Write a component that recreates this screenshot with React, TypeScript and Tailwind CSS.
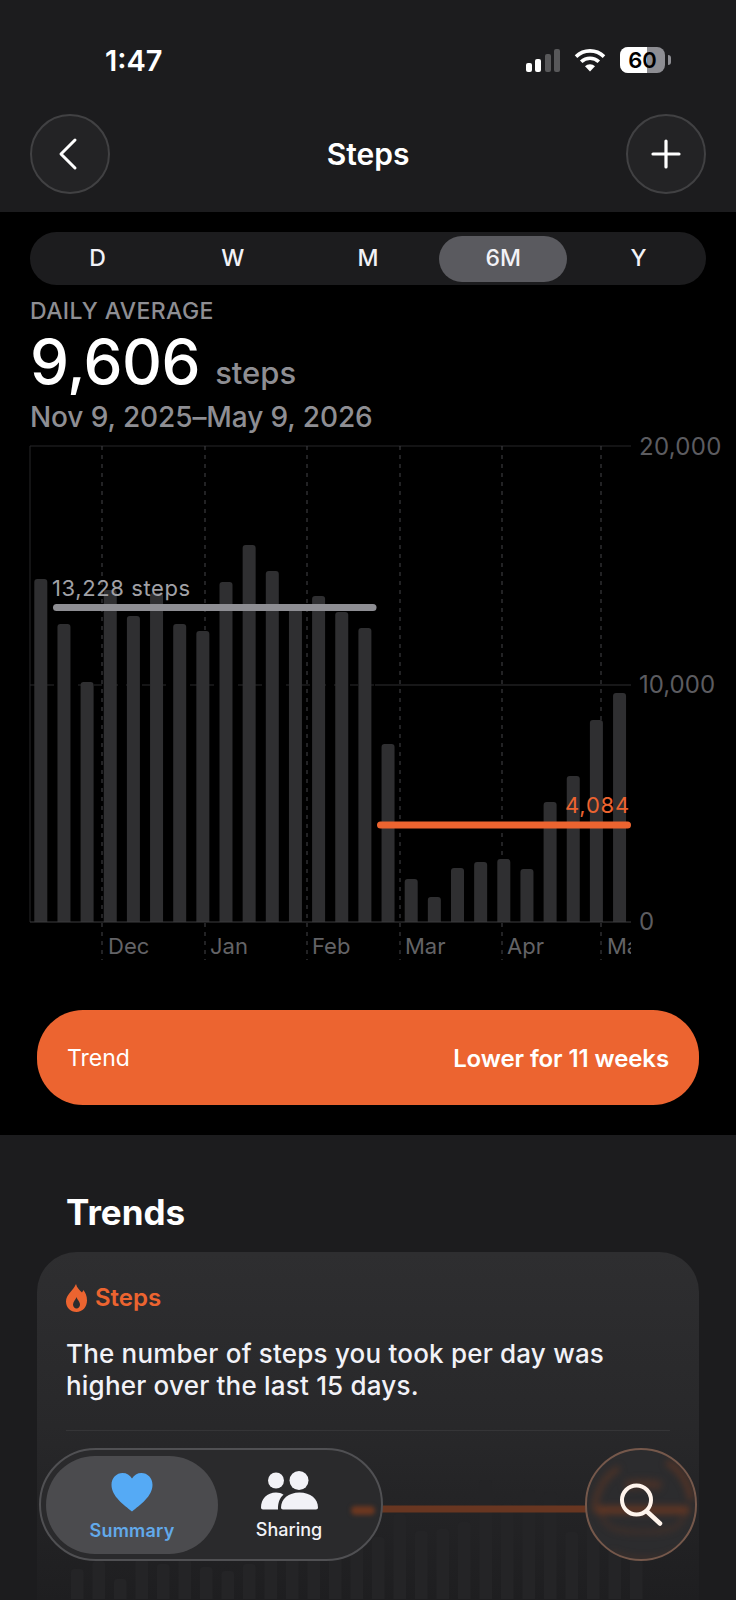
import { FC } from 'react';

const bars = [579, 624, 682, 590, 616, 593, 624, 631, 582, 545, 571, 607, 596, 612, 628, 744, 879, 897, 868, 862, 859, 869, 802, 776, 720, 693];
const faintBars = [1570, 1562, 1580, 1560, 1565, 1560, 1568, 1572, 1565, 1550, 1540, 1555, 1540, 1532, 1538, 1515, 1532, 1530, 1523, 1481, 1505, 1491, 1493, 1533, 1500, 1520, 1540];
const gridX = [102, 205, 307, 400, 502, 601];
const months = [
  { label: 'Dec', w: 'w-[102px]' },
  { label: 'Jan', w: 'w-[102px]' },
  { label: 'Feb', w: 'w-[93px]' },
  { label: 'Mar', w: 'w-[102px]' },
  { label: 'Apr', w: 'w-[100px]' },
  { label: 'May', w: 'w-[50px]' },
];
const ranges = ['D', 'W', 'M', '6M', 'Y'];

const StatusBar: FC = () => (
  <div className="flex h-[40px] items-center justify-between pl-[105px] pr-[65px]">
    <span className="text-[29px] font-semibold leading-none text-white">1:47</span>
    <div className="flex items-center gap-[14px]">
      <div className="flex h-[23px] items-end gap-[3.5px]">
        <span className="h-[9px] w-[6px] rounded-[2px] bg-white" />
        <span className="h-[13px] w-[6px] rounded-[2px] bg-white" />
        <span className="h-[18px] w-[6px] rounded-[2px] bg-[#58585a]" />
        <span className="h-[23px] w-[6px] rounded-[2px] bg-[#58585a]" />
      </div>
      <svg width="32" height="24" viewBox="0 0 32 24" fill="none" stroke="#fff" strokeWidth="3.6">
        <path d="M2 8.6a20 20 0 0 1 28 0" />
        <path d="M7.2 13.8a12.6 12.6 0 0 1 17.6 0" />
        <path d="M16 23.5l-5-5.2a7 7 0 0 1 10 0z" fill="#fff" stroke="none" />
      </svg>
      <div className="flex items-center gap-[3px]">
        <div className="relative flex h-[26px] w-[45px] items-center justify-center overflow-hidden rounded-[8px] bg-[#8e8e93]">
          <span className="absolute inset-y-0 left-0 w-[27px] bg-white" />
          <span className="relative text-[22px] font-semibold leading-none text-black">60</span>
        </div>
        <span className="h-[10px] w-[3px] rounded-r-full bg-[#8e8e93]" />
      </div>
    </div>
  </div>
);

const RoundButton: FC<{ children: React.ReactNode }> = ({ children }) => (
  <button className="flex h-[80px] w-[80px] items-center justify-center rounded-full border-2 border-[#414143] bg-[#232325]">
    {children}
  </button>
);

const Chart: FC = () => (
  <div className="relative h-[538px] w-full">
    <svg className="absolute left-0 top-0" width="736" height="538" viewBox="0 432 736 538" fill="none">
      <path d="M30 446H631M30 446V922" stroke="#262628" strokeWidth="1" />
      <path d="M30 685H375" stroke="#2a2a2c" strokeWidth="1" strokeDasharray="8 8" />
      <path d="M375 685H631" stroke="#2e2e30" strokeWidth="1" />
      {gridX.map((x) => (
        <path key={x} d={`M${x} 446V960`} stroke="#454548" strokeWidth="1" strokeDasharray="4 5" />
      ))}
      {bars.map((top, i) => (
        <path
          key={i}
          d={`M${34.3 + 23.15 * i} 922V${top + 3}a3 3 0 0 1 3-3h7a3 3 0 0 1 3 3V922z`}
          fill="#2f2f31"
        />
      ))}
      <path d="M30 922H631" stroke="#3c3c3e" strokeWidth="1" />
      <path d="M56.5 607.5H373" stroke="#8e8e93" strokeWidth="7" strokeLinecap="round" />
      <path d="M380.5 825H627.5" stroke="#ec6430" strokeWidth="7" strokeLinecap="round" />
    </svg>

    <span className="absolute left-[52px] top-[144px] text-[22px] leading-[24px] tracking-[0.6px] text-[#a1a1a6]">13,228 steps</span>
    <span className="absolute right-[106px] top-[361px] text-[22px] leading-[24px] tracking-[0.8px] text-[#ec6430]">4,084</span>

    <span className="absolute left-[639px] top-[1px] text-[24px] leading-[28px] tracking-[0.3px] text-[#5c5c60]">20,000</span>
    <span className="absolute left-[639px] top-[239px] text-[24px] leading-[28px] text-[#5c5c60]">10,000</span>
    <span className="absolute left-[639px] top-[476px] text-[24px] leading-[28px] text-[#5c5c60]">0</span>

    <div className="absolute left-[108px] top-[501px] flex w-[523px] overflow-hidden">
      {months.map((m) => (
        <span key={m.label} className={`${m.w} shrink-0 whitespace-nowrap text-[22px] leading-[26px] text-[#636366]`}>
          {m.label}
        </span>
      ))}
    </div>
  </div>
);

const TabBar: FC = () => (
  <div className="absolute bottom-[39px] left-[39px] flex h-[113px] w-[344px] items-center rounded-full border-2 border-[#505053] bg-[#2a2a2c] pl-[5px]">
    <div className="flex h-[98px] w-[172px] flex-col items-center rounded-full bg-[#4b4b4e] pt-[16px]">
      <svg width="44" height="40" viewBox="0 0 44 40">
        <path d="M22 39.5C14 33 1.5 24.5 1.5 12.8 1.5 5.8 6.6 1 12.6 1c4 0 7.300 2 9.400 5.600C24.100 3 27.400 1 31.400 1c6 0 11.100 4.800 11.100 11.800C42.500 24.500 30 33 22 39.500z" fill="#55aaf5" />
      </svg>
      <span className="mt-[8px] text-[18px] font-semibold leading-[22px] tracking-[0.2px] text-[#62a9ea]">Summary</span>
    </div>
    <div className="flex w-[142px] flex-col items-center pt-[2px]">
      <svg width="57" height="40" viewBox="0 0 57 40" fill="#f2f2f7">
        <circle cx="15" cy="9.500" r="8" />
        <circle cx="38" cy="9.500" r="9.500" />
        <path d="M0 36.500C0 28 6 21.500 15 21.500c3 0 5.500.8 7.500 2.200C18.500 27 16.800 32 17 38.500H2c-1.200 0-2-.7-2-2z" />
        <path d="M20 36.500C20 28 27.500 21.500 38.500 21.500S57 28 57 36.500c0 1.300-.8 2-2 2H22c-1.200 0-2-.7-2-2z" />
      </svg>
      <span className="mt-[8px] text-[18px] font-medium leading-[22px] text-[#f2f2f7]">Sharing</span>
    </div>
    <span className="absolute right-[6px] top-[56px] h-[9px] w-[24px] rounded-full bg-[#6b3720] blur-[2px]" />
  </div>
);

const SearchButton: FC = () => (
  <div className="absolute bottom-[39px] right-[39px] flex h-[113px] w-[112px] items-center justify-center overflow-hidden rounded-full border-2 border-[#75584b] bg-[#2c2c2e]">
    <svg className="absolute inset-0" width="112" height="113" viewBox="0 0 112 113" fill="none" stroke="#6a3822">
      <g style={{ filter: 'blur(3.500px)' }}>
        <path d="M8 62a48 48 0 0 1 24-44" strokeWidth="5" opacity="0.6" />
        <path d="M80 12a48 48 0 0 1 24 38" strokeWidth="6" opacity="0.7" />
        <path d="M10 60H102" strokeWidth="7" />
        <path d="M14 64c4 14 14 18 42 18s38-4 42-18" strokeWidth="3" opacity="0.45" />
        <path d="M24 102c20 9 48 9 66 0" strokeWidth="3" opacity="0.45" />
        <path d="M38 36c10-3 28-3 36 0" strokeWidth="9" opacity="0.45" />
      </g>
    </svg>
    <svg className="relative" width="44" height="44" viewBox="0 0 44 44" fill="none" stroke="#fff4ec" strokeLinecap="round">
      <circle cx="17.500" cy="17" r="14.500" strokeWidth="4" />
      <path d="M28 28.500L41 40.500" strokeWidth="4.500" />
    </svg>
  </div>
);

export default function App() {
  return (
    <div className="relative flex h-[1600px] w-[736px] flex-col overflow-hidden bg-black font-['Inter',sans-serif]">
      {/* header */}
      <div className="h-[212px] shrink-0 bg-[#1c1c1e] pt-[40px]">
        <StatusBar />
        <div className="mt-[34px] flex items-center justify-between px-[30px]">
          <RoundButton>
            <svg className="mr-[4px]" width="24" height="34" viewBox="0 0 24 34" fill="none" stroke="#fff" strokeWidth="3" strokeLinecap="round" strokeLinejoin="round">
              <path d="M19 3L5 17l14 14" />
            </svg>
          </RoundButton>
          <h1 className="text-[30px] font-semibold leading-none text-white">Steps</h1>
          <RoundButton>
            <svg width="32" height="32" viewBox="0 0 32 32" fill="none" stroke="#fff" strokeWidth="3.200" strokeLinecap="round">
              <path d="M16 3v26M3 16h26" />
            </svg>
          </RoundButton>
        </div>
      </div>

      {/* range picker */}
      <div className="mx-[30px] mt-[20px] grid h-[53px] shrink-0 grid-cols-5 items-center rounded-full bg-[#1c1c1e]">
        {ranges.map((r) => (
          <span
            key={r}
            className={`flex h-[46px] items-center justify-center justify-self-center rounded-full text-[23px] font-medium text-[#f2f2f7] ${r === '6M' ? 'w-[128px] bg-[#5a5a5f]' : 'w-full'}`}
          >
            {r}
          </span>
        ))}
      </div>

      {/* summary */}
      <div className="mt-[14px] shrink-0 px-[30px]">
        <div className="h-[23px] text-[23px] font-medium leading-[24px] tracking-[0.4px] text-[#8e8e93]">DAILY AVERAGE</div>
        <div className="flex h-[76px] items-baseline pt-[2px]">
          <span className="text-[62px] font-medium leading-[76px] tracking-[-0.5px] text-white">9,606</span>
          <span className="ml-[15px] text-[31px] font-medium text-[#8e8e93]">steps</span>
        </div>
        <div className="h-[34px] pt-[2px] text-[28px] font-medium leading-[34px] tracking-[-0.1px] text-[#8e8e93]">Nov 9, 2025–May 9, 2026</div>
      </div>

      <Chart />

      {/* trend pill */}
      <div className="mx-[37px] mb-[30px] mt-[40px] flex h-[95px] shrink-0 items-center justify-between rounded-[46px] bg-[#ec6430] px-[30px] pt-[2px] text-[23px] text-white">
        <span>Trend</span>
        <span className="text-[24px] font-semibold tracking-[-0.1px]">Lower for 11 weeks</span>
      </div>

      {/* trends */}
      <div className="flex min-h-0 flex-1 flex-col bg-[#1c1c1e] px-[37px] pt-[57px]">
        <h2 className="px-[29px] text-[35px] font-bold leading-[40px] text-white">Trends</h2>
        <div className="mt-[20px] flex-1 overflow-hidden rounded-t-[40px] bg-gradient-to-b from-[#2e2e30] via-[#28282a] to-[#1e1e20]">
          <div className="px-[29px] pt-[31px]">
            <div className="flex h-[28px] items-center gap-[8px] pt-[2px]">
              <svg width="21" height="28" viewBox="0 0 21 28">
                <path
                  fillRule="evenodd"
                  d="M10 0c1 4 3.500 6 6 8.500 .7-.8 1-1.500 1.200-2.500C19.500 8.500 21 12 21 16.500 21 23 16.500 28 10.500 28S0 23.500 0 17.500C0 10.500 7 7 10 0zM10.500 13c-.5 2.500-3.500 4.500-3.500 7.500 0 2.200 1.500 4 3.500 4s3.500-1.800 3.500-4c0-3-3-5-3.500-7.500z"
                  fill="#ec6430"
                />
              </svg>
              <span className="text-[24px] font-semibold leading-none text-[#ec6430]">Steps</span>
            </div>
            <p className="mt-[27px] whitespace-nowrap text-[26px] font-medium leading-[32px] tracking-[0.2px] text-[#f2f2f7]">
              The number of steps you took per day was
              <br />
              higher over the last 15 days.
            </p>
            <div className="mt-[28px] h-px bg-[#353537]" />
          </div>
          <svg width="662" height="168" viewBox="37 1432 662 168" fill="none">
            {faintBars.map((top, i) => (
              <path
                key={i}
                d={`M${71 + 21.5 * i} 1600V${top + 3}a3 3 0 0 1 3-3h6.500a3 3 0 0 1 3 3V1600z`}
                fill="#242426"
              />
            ))}
            <path d="M345 1510H670" stroke="#683621" strokeWidth="7" />
          </svg>
        </div>
      </div>

      <TabBar />
      <SearchButton />
    </div>
  );
}
